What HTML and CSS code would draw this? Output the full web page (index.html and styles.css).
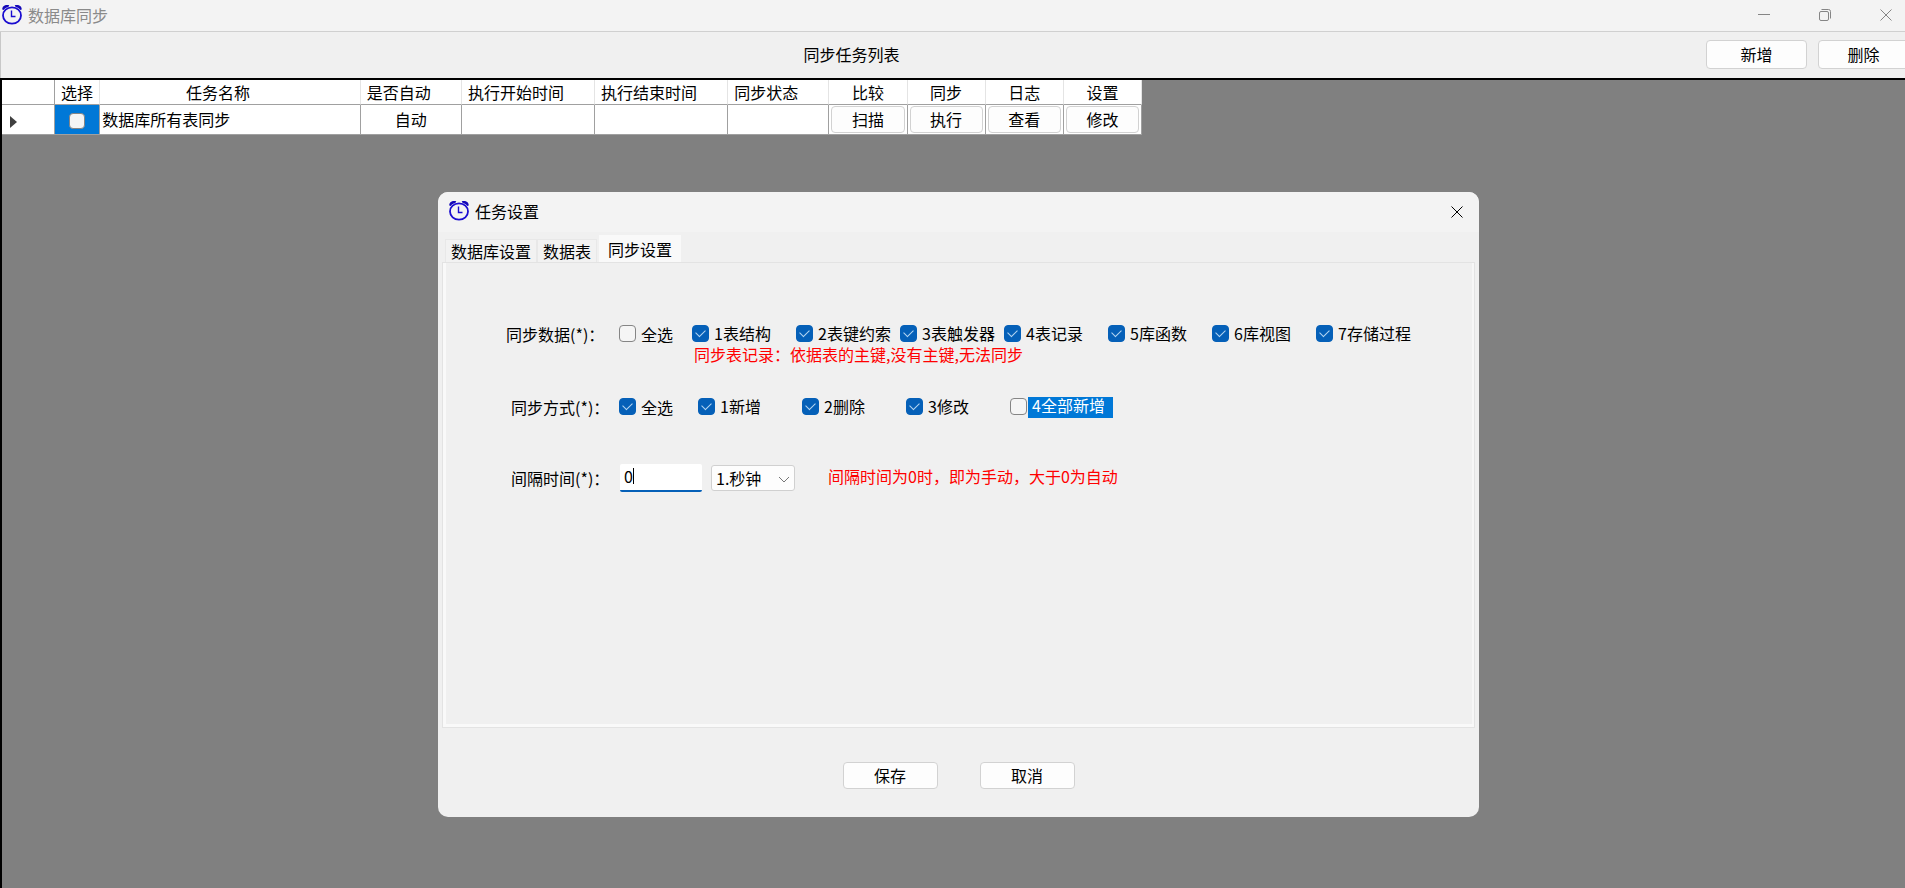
FILE: index.html
```html
<!DOCTYPE html>
<html lang="zh-CN">
<head>
<meta charset="utf-8">
<title>数据库同步</title>
<link rel="stylesheet" href="styles.css">
</head>
<body>
<svg class="defs" aria-hidden="true">
  <symbol id="clock" viewBox="0 0 20 20">
    <path d="M0.3 5C0 1.500 3.500 -0.300 7.300 0.800L6.300 2.500C4.300 2.900 2.700 4 1.600 5.500ZM19.700 5C20 1.500 16.500 -0.300 12.700 0.800L13.700 2.500C15.700 2.900 17.300 4 18.400 5.500Z" fill="#1408b8"/>
    <ellipse cx="10" cy="11" rx="9" ry="8.200" fill="none" stroke="#1a0cd0" stroke-width="1.800"/>
    <path d="M9.500 6V12H13.500" fill="none" stroke="#1a0cd0" stroke-width="1.400"/>
  </symbol>
</svg>
<div class="app">
  <header class="titlebar">
    <svg class="clock"><use href="#clock"/></svg>
    <h1 class="app-title">数据库同步</h1>
    <div class="window-buttons">
      <button type="button" aria-label="最小化"><svg viewBox="0 0 12 12"><path d="M0 5.500H12"/></svg></button>
      <button type="button" aria-label="还原"><svg viewBox="0 0 12 12"><rect x="0.500" y="2.500" width="9" height="9" rx="1.500"/><path d="M2.500 0.500H9.500A2 2 0 0 1 11.500 2.500V9.500"/></svg></button>
      <button type="button" aria-label="关闭"><svg viewBox="0 0 12 12"><path d="M0.500 0.500L11.500 11.500M11.500 0.500L0.500 11.500"/></svg></button>
    </div>
  </header>
  <div class="toolbar">
    <h2 class="toolbar-title">同步任务列表</h2>
    <button type="button" class="btn add">新增</button>
    <button type="button" class="btn remove">删除</button>
  </div>
  <main class="workspace">
    <table class="tasks">
      <colgroup><col class="c-head"><col class="c-check"><col class="c-name"><col class="c-auto"><col class="c-time"><col class="c-time"><col class="c-auto"><col class="c-act"><col class="c-act"><col class="c-act"><col class="c-act"></colgroup>
      <thead>
        <tr><th class="corner"></th><th>选择</th><th class="sortable">任务名称</th><th class="sortable">是否自动</th><th class="sortable">执行开始时间</th><th class="sortable">执行结束时间</th><th class="sortable">同步状态</th><th>比较</th><th>同步</th><th>日志</th><th>设置</th></tr>
      </thead>
      <tbody>
        <tr>
          <td class="row-head"><svg class="pointer" viewBox="0 0 7 12"><path d="M0 0L7 6L0 12Z"/></svg></td>
          <td class="selected"><input type="checkbox" class="check small" aria-label="选择"></td>
          <td class="name">数据库所有表同步</td>
          <td>自动</td><td></td><td></td><td></td>
          <td class="action"><button type="button" class="btn">扫描</button></td>
          <td class="action"><button type="button" class="btn">执行</button></td>
          <td class="action"><button type="button" class="btn">查看</button></td>
          <td class="action"><button type="button" class="btn">修改</button></td>
        </tr>
      </tbody>
    </table>
  </main>
</div>

<section class="dialog" role="dialog" aria-labelledby="dialog-title">
  <header class="dialog-bar">
    <svg class="clock"><use href="#clock"/></svg>
    <h2 id="dialog-title">任务设置</h2>
    <button type="button" class="dialog-close" aria-label="关闭"><svg viewBox="0 0 12 12"><path d="M0.500 0.500L11.500 11.500M11.500 0.500L0.500 11.500"/></svg></button>
  </header>
  <div class="tabs" role="tablist">
    <button type="button" role="tab" class="tab">数据库设置</button>
    <button type="button" role="tab" class="tab">数据表</button>
    <button type="button" role="tab" class="tab active" aria-selected="true">同步设置</button>
  </div>
  <form class="panel">
    <div class="row data-row">
      <span class="label">同步数据(*)：</span>
      <label class="option all"><input type="checkbox" class="check"><span>全选</span></label>
      <div class="options">
        <label class="option"><input type="checkbox" class="check" checked><span>1表结构</span></label>
        <label class="option"><input type="checkbox" class="check" checked><span>2表键约索</span></label>
        <label class="option"><input type="checkbox" class="check" checked><span>3表触发器</span></label>
        <label class="option"><input type="checkbox" class="check" checked><span>4表记录</span></label>
        <label class="option"><input type="checkbox" class="check" checked><span>5库函数</span></label>
        <label class="option"><input type="checkbox" class="check" checked><span>6库视图</span></label>
        <label class="option"><input type="checkbox" class="check" checked><span>7存储过程</span></label>
        <p class="note">同步表记录：依据表的主键,没有主键,无法同步</p>
      </div>
    </div>
    <div class="row mode-row">
      <span class="label">同步方式(*)：</span>
      <label class="option all"><input type="checkbox" class="check" checked><span>全选</span></label>
      <div class="options">
        <label class="option"><input type="checkbox" class="check" checked><span>1新增</span></label>
        <label class="option"><input type="checkbox" class="check" checked><span>2删除</span></label>
        <label class="option"><input type="checkbox" class="check" checked><span>3修改</span></label>
        <label class="option focused"><input type="checkbox" class="check"><span>4全部新增</span></label>
      </div>
    </div>
    <div class="row time-row">
      <label class="label" for="interval">间隔时间(*)：</label>
      <div class="field"><input id="interval" type="text" value="0"><i class="caret"></i></div>
      <div class="unit">
        <select aria-label="时间单位"><option>1.秒钟</option></select>
        <svg viewBox="0 0 12 7"><path d="M1 1L6 6L11 1"/></svg>
      </div>
      <p class="note">间隔时间为0时，即为手动，大于0为自动</p>
    </div>
  </form>
  <footer class="dialog-footer">
    <button type="button" class="btn">保存</button>
    <button type="button" class="btn">取消</button>
  </footer>
</section>
</body>
</html>
```
FILE: styles.css
```css
* { box-sizing: border-box; }
html, body { height: 100%; }
body {
  margin: 0;
  overflow: hidden;
  background: #808080;
  color: #000;
  font: 16px/20px "Noto Sans CJK SC", sans-serif;
}
button, input, select { font: inherit; color: inherit; padding: 0; margin: 0; }
h1, h2, p { margin: 0; font: inherit; }
svg { display: block; fill: none; stroke: currentColor; }
.defs { position: absolute; width: 0; height: 0; }
.clock { width: 20px; height: 21px; stroke: none; overflow: visible; }

.btn {
  height: 29px;
  padding-bottom: 2px;
  background: #fdfdfd;
  border: 1px solid #d2d2d2;
  border-radius: 4px;
  line-height: 20px;
}

/* Main window */
.app { display: flex; flex-direction: column; height: 100%; }
.titlebar {
  display: flex;
  align-items: center;
  height: 32px;
  padding: 0 0 2px 2px;
  background: #f3f3f3;
  border-bottom: 1px solid #d0d0d0;
}
.app-title { flex: 1; margin-left: 6px; color: #8a8a8a; }
.window-buttons { display: flex; margin-right: -11px; color: #858585; }
.window-buttons button {
  display: flex;
  align-items: center;
  justify-content: center;
  width: 61px;
  height: 28px;
  background: none;
  border: 0;
}
.window-buttons svg { width: 12px; height: 12px; }
.toolbar {
  display: flex;
  align-items: center;
  height: 46px;
  padding-bottom: 1px;
  background: #f0f0f0;
  border-left: 1px solid #c8c8c8;
}
.toolbar-title { flex: 1; padding-bottom: 1px; text-align: center; }
.toolbar .add { width: 101px; margin: 0 11px 0 4px; }
.toolbar .remove { width: 91px; margin-right: -4px; }
.workspace { flex: 1; border-top: 2px solid #000; border-left: 2px solid #000; }

/* Task list */
.tasks { table-layout: fixed; width: 1140px; border-collapse: separate; border-spacing: 0; background: #fff; }
.c-head { width: 53px; }
.c-check { width: 45px; }
.c-name { width: 260px; }
.c-auto { width: 101px; }
.c-time { width: 133px; }
.c-act { width: 78px; }
.tasks th {
  height: 25px;
  padding: 0;
  font-weight: 400;
  border-right: 1px solid #e4e4e4;
  border-bottom: 1px solid #a0a0a0;
}
.tasks .corner { border-right-color: #a0a0a0; }
.tasks .sortable { padding-right: 24px; }
.tasks td {
  height: 30px;
  padding: 0 0 2px;
  text-align: center;
  border-right: 1px solid #a0a0a0;
  border-bottom: 1px solid #a0a0a0;
}
.tasks .row-head { padding: 4px 0 0 8px; }
.pointer { width: 7px; height: 12px; fill: #404040; stroke: none; }
.tasks .selected { background: #0078d7; }
.tasks .name { padding-left: 2px; text-align: left; }
.tasks .action { padding: 1px 2px; }
.action .btn { display: block; width: 100%; height: 27px; }

/* Check boxes */
.check {
  appearance: none;
  flex: none;
  display: inline-grid;
  place-items: center;
  width: 17px;
  height: 17px;
  background: #f5f5f5;
  border: 1px solid #858585;
  border-radius: 4px;
}
.check.small { width: 16px; height: 16px; vertical-align: middle; }
.check:checked { background: #0560b8; border-color: #0560b8; }
.check:checked::before {
  content: "";
  width: 8px;
  height: 5px;
  margin-bottom: 3px;
  border: solid #b5d6f2;
  border-width: 0 0 1px 1px;
  transform: rotate(-45deg);
}

/* Task settings dialog */
.dialog {
  position: absolute;
  top: 192px;
  left: 438px;
  width: 1041px;
  overflow: hidden;
  background: #f0f0f0;
  border-radius: 10px;
}
.dialog-bar { display: flex; align-items: center; height: 40px; padding: 0 6px 3px 11px; background: #f3f3f3; }
.dialog-bar h2 { flex: 1; margin-left: 6px; padding-top: 1px; }
.dialog-close { width: 32px; height: 32px; display: grid; place-items: center; margin-top: 2px; background: none; border: 0; }
.dialog-close svg { width: 12px; height: 12px; }
.tabs { display: flex; align-items: flex-end; height: 30px; padding: 0 4px 0 7px; }
.tab { height: 23px; padding: 0 5px; line-height: 22px; background: #f2f2f2; border: 1px solid #e8e8e8; border-bottom: 0; white-space: nowrap; }
.tab.active { height: 27px; margin-left: 2px; padding: 0 8px; line-height: 24px; background: #f9f9f9; border-color: #f9f9f9; }
.panel {
  min-height: 466px;
  margin: 0 4px;
  padding: 60px 0 0 60px;
  border: 1px solid #e3e3e3;
  box-shadow: inset 3px -3px #f9f9f9, inset -2px 0 #f7f7f7;
}
.row { display: flex; align-items: flex-start; }
.label { flex: none; width: 108px; line-height: 22px; white-space: nowrap; }
.option { display: flex; align-items: center; height: 21px; white-space: nowrap; }
.option span { margin: 0 0 2px 5px; }
.option.all { flex: none; }
.option.all span { margin-bottom: 0; }
.options { display: grid; grid-template-columns: repeat(7, 104px); }
.note { color: #f00; white-space: nowrap; }
.data-row { padding-left: 3px; }
.data-row .label { width: 113px; }
.data-row .all { width: 73px; }
.data-row .note { grid-column: 1 / -1; padding-left: 2px; }
.mode-row { padding: 32px 0 0 8px; }
.mode-row .all { width: 79px; }
.option.focused span { height: 21px; margin: 1px 0 0 1px; padding: 0 4px; width: 85px; line-height: 17px; background: #0078d7; color: #fff; }
.time-row { padding: 46px 0 0 8px; }
.time-row .label { line-height: 28px; width: 109px; }
.field { position: relative; width: 82px; height: 28px; }
.field input {
  width: 100%;
  height: 100%;
  padding: 0 4px 2px;
  background: #fff;
  border: 0;
  border-bottom: 2px solid #0560b8;
  border-radius: 2px;
  outline: 0;
}
.caret { position: absolute; left: 13px; top: 4px; width: 1px; height: 16px; background: #000; }
.unit { position: relative; width: 84px; height: 26px; margin: 1px 0 0 9px; }
.unit select {
  appearance: none;
  width: 100%;
  height: 100%;
  padding-left: 4px;
  background: #fdfdfd;
  border: 1px solid #d0d0d0;
  border-radius: 3px;
}
.unit svg { position: absolute; right: 5px; top: 11px; width: 12px; height: 7px; color: #777; pointer-events: none; }
.time-row .note { margin-left: 33px; line-height: 24px; }
.dialog-footer { display: flex; justify-content: center; gap: 42px; padding: 34px 0 28px; }
.dialog-footer .btn { width: 95px; height: 27px; line-height: 18px; }
```
